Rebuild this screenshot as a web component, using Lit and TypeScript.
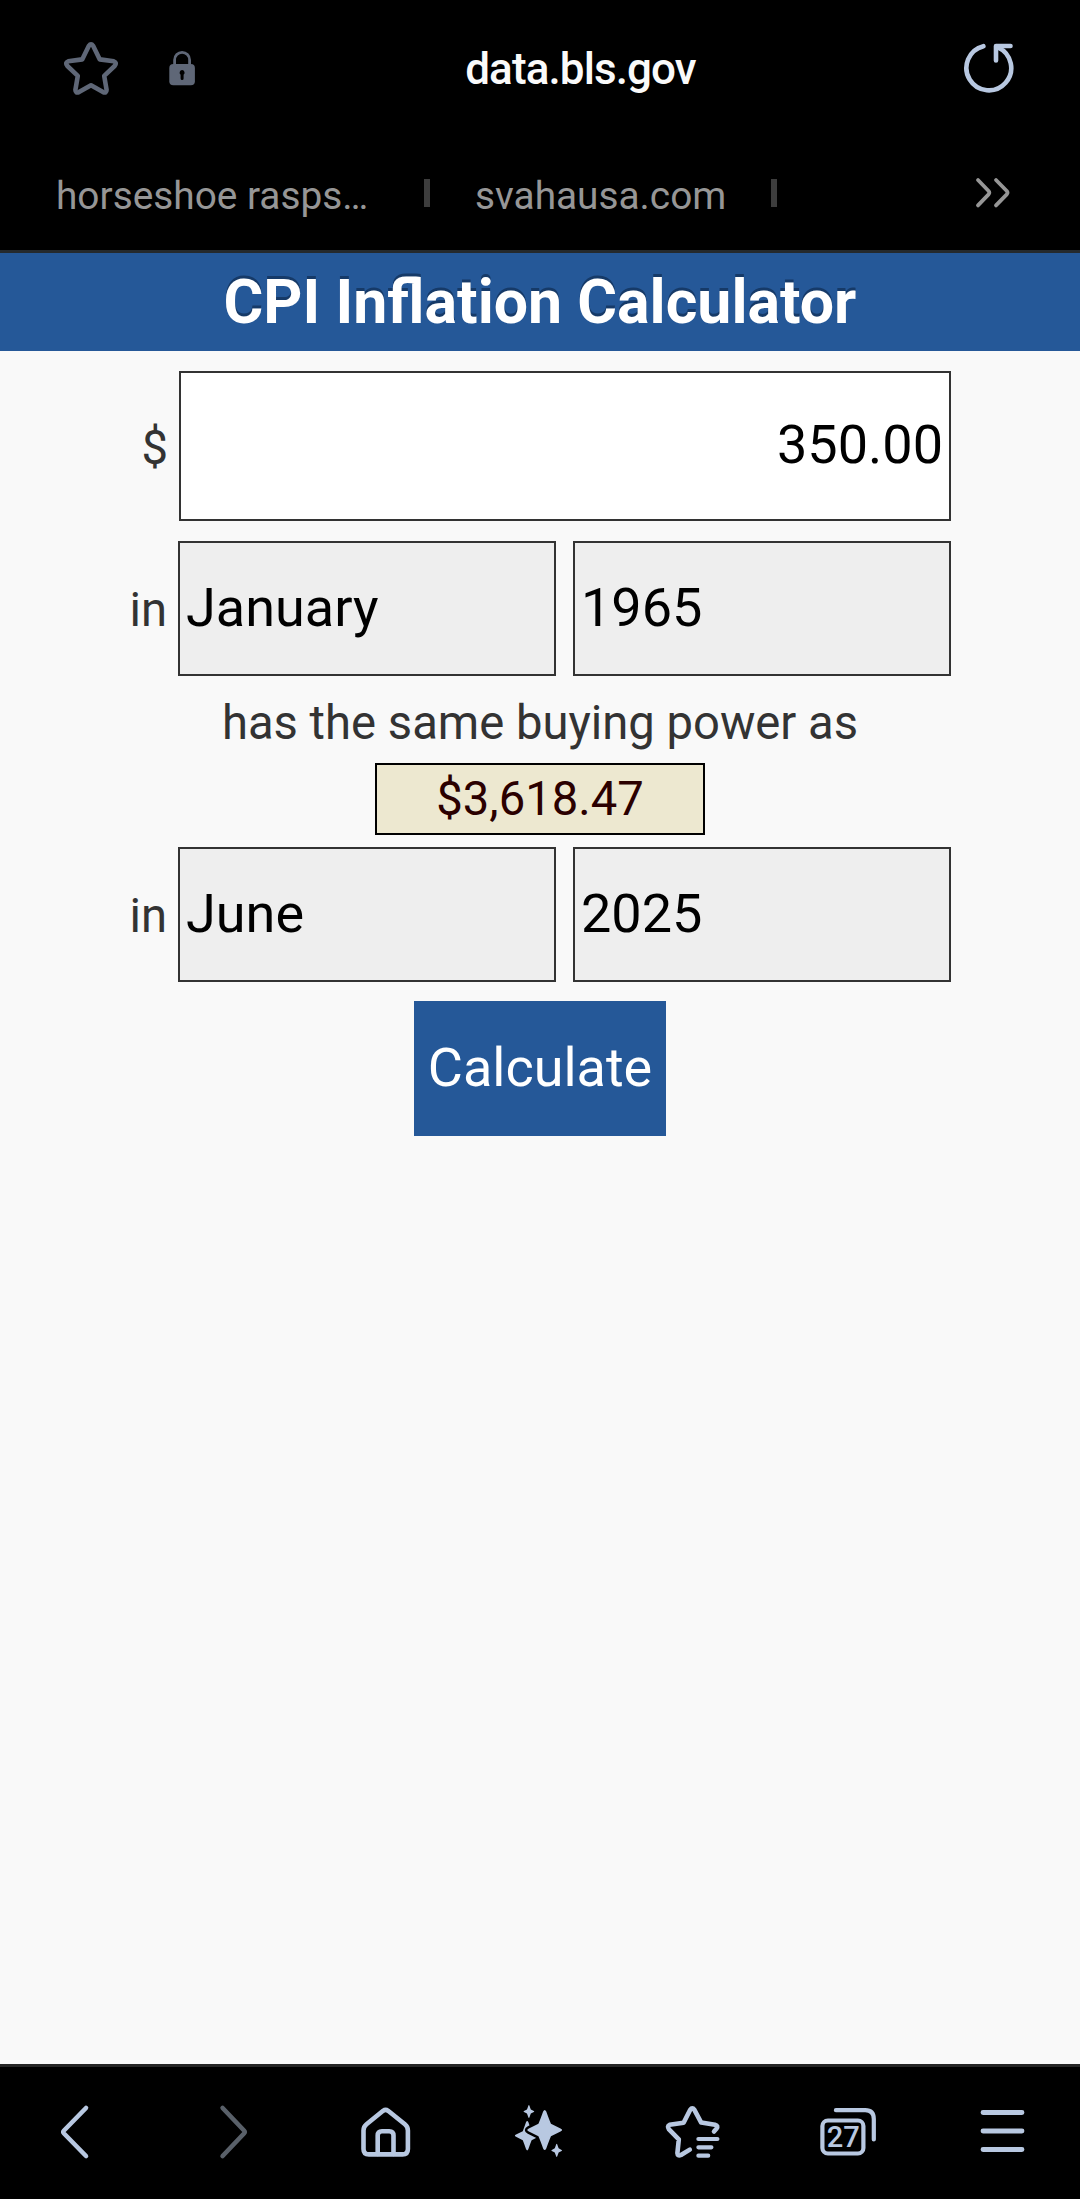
import { LitElement, html, svg, css } from "lit";
import { customElement, property } from "lit/decorators.js";

@customElement("browser-top")
class BrowserTop extends LitElement {
  static styles = css`
    :host { display: block; background: #000; height: 250px; border-bottom: 3px solid #252a2d; font-family: Roboto, sans-serif; }
    .address { display: grid; grid-template-columns: 63px 56px 49px 28px 1fr 52px 65px; height: 136px; align-items: center; }
    svg { display: block; }
    .star { grid-column: 2; }
    .lock { grid-column: 4; }
    .url { color: #fafafa; font-weight: 500; font-size: 44px; letter-spacing: -0.9px; line-height: 50px; text-align: center; padding: 2px 0 0 0; margin-left: 2px; }
    .bookmarks { display: flex; height: 114px; align-items: flex-start; color: #969696; font-size: 38.8px; line-height: 46px; white-space: nowrap; }
    .mark { padding-top: 37px; }
    .first { width: 310px; padding-left: 56px; }
    .second { width: 250px; margin-left: 45px; }
    .rule { width: 6px; height: 28px; background: #3d3d3d; margin-top: 43px; }
    .first + .rule { margin-left: 58px; }
    .second + .rule { margin-left: 46px; }
    .more { margin: 40px 68px 0 auto; }
  `;
  render() {
    return html`
      <div class="address">
        <svg class="star" width="56" height="60" viewBox="63 38 56 60" fill="none" stroke="#5f6777" stroke-width="4.6" stroke-linejoin="round">
          <path d="M88.9 45.7 Q91 42.7 93.1 45.7 L99.8 59.4 L113.8 61.3 Q117.4 62.6 114.6 66 L104.2 75.8 L106.6 89.8 Q106.6 93.6 103 92.1 L91 85.3 L79 92.1 Q75.4 93.6 75.4 89.8 L77.8 75.8 L67.4 66 Q64.6 62.6 68.2 61.3 L82.2 59.4 Z" />
        </svg>
        <svg class="lock" width="28" height="38" viewBox="168 49 28 38">
          <path d="M174.6 66 V60 a7.5 7.7 0 0 1 15 0 V66" fill="none" stroke="#5f6777" stroke-width="2.8" />
          <rect x="169.3" y="64" width="25.6" height="21.3" rx="4" fill="#5f6777" />
          <path d="M182.1 70 a2.7 2.7 0 0 1 1.5 4.8 V78.5 a1.5 1.5 0 0 1 -3 0 V74.8 a2.7 2.7 0 0 1 1.5 -4.8" fill="#000" />
        </svg>
        <div class="url">data.bls.gov</div>
        <svg width="52" height="52" viewBox="963 42 52 52" fill="none" stroke="#b8c8e1" stroke-width="4.6" stroke-linecap="round" stroke-linejoin="round">
          <path d="M983.4 46.2 A22.4 22.4 0 1 0 998 47.5" />
          <path d="M1010.5 46 H996 V60.5" />
        </svg>
      </div>
      <div class="bookmarks">
        <div class="mark first">horseshoe rasps…</div><div class="rule"></div>
        <div class="mark second">svahausa.com</div><div class="rule"></div>
        <svg class="more" width="38" height="34" viewBox="974 176 38 34" fill="none" stroke="#969696" stroke-width="3.8" stroke-linecap="round" stroke-linejoin="round">
          <path d="M978 180 L988.6 191 Q990 192.7 988.6 194.4 L978 205.4 M996 180 L1006.8 191 Q1008.2 192.7 1006.8 194.4 L996 205.4" />
        </svg>
      </div>
    `;
  }
}

@customElement("period-row")
class PeriodRow extends LitElement {
  @property() month = "";
  @property() year = "";
  static styles = css`
    :host { display: grid; grid-template-columns: 178px 378px 378px; column-gap: 0; height: 135px; }
    .label { text-align: right; padding: 39px 11px 0 0; font-size: 47.2px; line-height: 60px; color: #333; }
    .select { box-sizing: border-box; border: 2px solid #333; background: #eee; color: #000; font-size: 54px; line-height: 62px; padding: 34px 0 0 6px; }
    .year { margin-left: 17px; width: 378px; }
  `;
  render() {
    return html`<div class="label">in</div><div class="select">${this.month}</div><div class="select year">${this.year}</div>`;
  }
}

@customElement("bottom-bar")
class BottomBar extends LitElement {
  static styles = css`
    :host { display: block; background: #000; border-top: 3px solid #252525; height: 132px; }
    .icons { display: flex; padding: 33px 50px 0 45px; justify-content: space-between; }
    svg { display: block; fill: none; stroke: #b8c8e1; stroke-width: 4.6; stroke-linecap: round; stroke-linejoin: round; }
    .dim { stroke: #596069; }
    .solid { fill: #b8c8e1; stroke: none; }
    .cut { stroke: #000; stroke-width: 5; paint-order: stroke; }
    .count { fill: #b8c8e1; stroke: none; font: 500 30px Roboto, sans-serif; }
  `;
  spark(cx: number, cy: number, rx: number, ry: number, cls = "solid") {
    const a = rx * 0.36;
    const b = ry * 0.31;
    const e = rx * 0.09;
    return svg`<path class=${cls} d="M${cx - e} ${cy - ry + e} Q${cx} ${cy - ry - e} ${cx + e} ${cy - ry + e} Q${cx + a * 0.7} ${cy - b * 1.7} ${cx + a} ${cy - b} L${cx + rx - e} ${cy - e} Q${cx + rx + e} ${cy} ${cx + rx - e} ${cy + e} L${cx + a} ${cy + b} Q${cx + a * 0.7} ${cy + b * 1.7} ${cx + e} ${cy + ry - e} Q${cx} ${cy + ry + e} ${cx - e} ${cy + ry - e} Q${cx - a * 0.7} ${cy + b * 1.7} ${cx - a} ${cy + b} L${cx - rx + e} ${cy + e} Q${cx - rx - e} ${cy} ${cx - rx + e} ${cy - e} L${cx - a} ${cy - b} Q${cx - a * 0.7} ${cy - b * 1.7} ${cx - e} ${cy - ry + e} Z"/>`;
  }
  render() {
    return html`<div class="icons">
      <svg width="60" height="64" viewBox="45 2100 60 64"><path d="M86 2108 L64 2130.5 Q62.6 2132 64 2133.5 L86 2156"/></svg>
      <svg class="dim" width="60" height="64" viewBox="200 2100 60 64"><path d="M222.6 2108 L244 2130.5 Q245.4 2132 244 2133.5 L222.6 2156"/></svg>
      <svg width="60" height="64" viewBox="354.5 2100 60 64">
        <path d="M382.6 2110.8 Q385.1 2109 387.6 2110.8 L404.4 2124.2 Q407.4 2126.6 407.4 2130.5 V2149 Q407.4 2154.4 402 2154.4 H368.4 Q363 2154.4 363 2149 V2130.5 Q363 2126.6 366 2124.2 Z"/>
        <path d="M377.2 2154 V2135.5 Q377.2 2131.2 381.4 2131.2 H388.8 Q393 2131.2 393 2135.5 V2154"/>
      </svg>
      <svg width="60" height="64" viewBox="509.3 2100 60 64">
        ${this.spark(527.5, 2135.7, 12.3, 14.7)}
        ${this.spark(545, 2130, 17.4, 20, "solid cut")}
        ${this.spark(529.2, 2111.5, 5.4, 6.6)}
        ${this.spark(557, 2150.4, 5.4, 6.6)}
      </svg>
      <svg width="60" height="64" viewBox="664 2100 60 64">
        <path d="M714 2131.5 L716.4 2128.8 Q718.8 2125.8 715 2124.8 L701.2 2122.6 L694.4 2109.8 Q692.3 2106.8 690.2 2109.8 L683.6 2122.8 L669.6 2124.8 Q666.8 2126 669 2129.4 L678.8 2139.4 L677.4 2153 Q677.6 2156.6 681 2155 L689.8 2149.6"/>
        <path d="M698.4 2139 H717.4 M698.4 2147.3 H711.4 M698.4 2155.7 H708.2" stroke-width="4.2"/>
      </svg>
      <svg width="60" height="64" viewBox="818.8 2100 60 64">
        <rect x="822.2" y="2120.5" width="41" height="33" rx="5.5" stroke-width="4.2"/>
        <path d="M835.7 2110.2 H865 Q873.6 2110.2 873.6 2119 V2139.4" stroke-width="4.2"/>
        <text class="count" x="843" y="2147.3" text-anchor="middle" textLength="33" lengthAdjust="spacingAndGlyphs">27</text>
      </svg>
      <svg width="56" height="64" viewBox="973.5 2100 56 64"><path d="M982.5 2112.5 H1021.5 M982.5 2131 H1021.5 M982.5 2149.5 H1021.5" stroke-width="4.8"/></svg>
    </div>`;
  }
}

@customElement("app-root")
class AppRoot extends LitElement {
  static styles = css`
    :host { display: flex; flex-direction: column; width: 1080px; height: 2199px; background: #f9f9f9; font-family: Roboto, sans-serif; overflow: hidden; }
    .title { margin: 0; box-sizing: border-box; height: 98px; padding-top: 1px; background: #255898; color: #fff; font-size: 60.8px; line-height: 98px; font-weight: 700; text-align: center; text-shadow: 0 -3px 0 #163a68; }
    .main { flex: 1; display: flex; flex-direction: column; padding-top: 20px; color: #333; font-size: 47.2px; line-height: 60px; }
    .amount { display: grid; grid-template-columns: 179px 772px; height: 150px; margin-bottom: 20px; }
    .dollar { text-align: right; padding: 47px 11px 0 0; }
    .input { box-sizing: border-box; border: 2px solid #333; background: #fff; color: #000; text-align: right; font-size: 54px; line-height: 62px; padding: 41px 6px 0 0; }
    .same { text-align: center; margin: 17px 0 10px; }
    .result { box-sizing: border-box; width: 330px; height: 72px; align-self: center; border: 2px solid #000; background: #ede8d0; color: #2b0000; text-align: center; padding-top: 4px; margin-bottom: 12px; }
    .go { width: 252px; height: 135px; align-self: center; margin-top: 19px; background: #255898; color: #fff; font-size: 54px; line-height: 62px; text-align: center; box-sizing: border-box; padding-top: 36px; }
  `;
  render() {
    return html`<browser-top></browser-top><h1 class="title">CPI Inflation Calculator</h1>
      <div class="main">
        <div class="amount"><div class="dollar">$</div><div class="input">350.00</div></div>
        <period-row month="January" year="1965"></period-row>
        <div class="same">has the same buying power as</div>
        <div class="result">$3,618.47</div>
        <period-row month="June" year="2025"></period-row>
        <div class="go">Calculate</div>
      </div>
      <bottom-bar></bottom-bar>`;
  }
}
